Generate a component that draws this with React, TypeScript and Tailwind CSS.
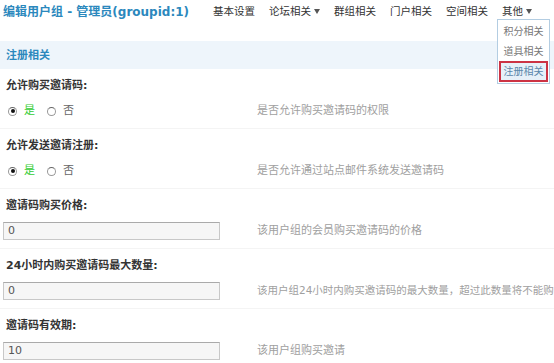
import React from "react"

const font = { fontFamily: '"DejaVu Sans", "Noto Sans CJK SC", sans-serif' }

function Caret() {
    return (
        <svg width="6" height="5" viewBox="0 0 6 5" className="ml-[3px] inline-block">
            <path d="M0 0 L6 0 L3 5 Z" fill="#555" />
        </svg>
    )
}

function Radio({ checked }: { checked?: boolean }) {
    return (
        <span className="w-[9px] h-[9px] rounded-full border border-[#9a9a9a] border-t-[#666] bg-white flex items-center justify-center">
            {checked && <span className="w-[4px] h-[4px] rounded-full bg-[#111]" />}
        </span>
    )
}

function Row({ label, desc, tight, children }: { label: string; desc: string; tight?: boolean; children: React.ReactNode }) {
    return (
        <div className="h-[60px] border-b border-[#f4f4f4]">
            <div className="h-[28px] flex items-center pt-[6px] pl-[6px] text-[11px] font-bold text-[#333]">{label}</div>
            <div className="h-[28px] flex items-center">
                <div className="w-[257px] shrink-0 flex items-center">{children}</div>
                <div className={`${tight ? "text-[10.5px]" : "text-[11px]"} text-[#a0a0a0] whitespace-nowrap`}>{desc}</div>
            </div>
        </div>
    )
}

function YesNo() {
    return (
        <div className="flex items-center pl-[8px] text-[11px]">
            <Radio checked />
            <span className="ml-[7px] text-[#33cc33]">是</span>
            <span className="ml-[12px]"><Radio /></span>
            <span className="ml-[7px] text-[#666]">否</span>
        </div>
    )
}

function Field({ value }: { value: string }) {
    return (
        <div className="ml-[3px] w-[217px] h-[18px] border border-[#c8c8c8] border-t-[#aaa] bg-[#f6f6f6] flex items-center pl-[4px] text-[11px] text-[#555]">
            {value}
        </div>
    )
}

export default function App() {
    const nav = ["基本设置", "论坛相关", "群组相关", "门户相关", "空间相关", "其他"]
    return (
        <div className="relative w-[554px] h-[363px] bg-white overflow-hidden" style={font}>
            {/* Header */}
            <div className="h-[23px] flex items-center">
                <div className="pl-[3px] text-[12px] font-bold text-[#2b88bd] whitespace-nowrap">编辑用户组 - 管理员(groupid:1)</div>
                <div className="ml-[24px] flex items-center gap-[14px] text-[10.5px] text-[#333]">
                    {nav.map((n, i) => (
                        <span key={n} className="flex items-center whitespace-nowrap">
                            {n}
                            {(i === 1 || i === 5) && <Caret />}
                        </span>
                    ))}
                </div>
            </div>

            {/* Section band */}
            <div className="mt-[18px] h-[28px] bg-[#eef5fb] flex items-center pt-[2px] pl-[6px] text-[11px] font-bold text-[#2b88bd]">
                注册相关
            </div>

            <Row label="允许购买邀请码:" desc="是否允许购买邀请码的权限"><YesNo /></Row>
            <Row label="允许发送邀请注册:" desc="是否允许通过站点邮件系统发送邀请码"><YesNo /></Row>
            <Row label="邀请码购买价格:" desc="该用户组的会员购买邀请码的价格"><Field value="0" /></Row>
            <Row label="24小时内购买邀请码最大数量:" desc="该用户组24小时内购买邀请码的最大数量，超过此数量将不能购" tight><Field value="0" /></Row>
            <Row label="邀请码有效期:" desc="该用户组购买邀请"><Field value="10" /></Row>

            {/* Dropdown menu */}
            <div className="absolute left-[497px] top-[19px] w-[53px] bg-white border border-[#b3cde2] py-[1px] text-[10px] text-[#777]">
                <div className="h-[20px] flex items-center justify-center">积分相关</div>
                <div className="h-[20px] flex items-center justify-center">道具相关</div>
                <div className="mx-[1px] h-[21px] flex items-center justify-center border-2 border-[#cc3344] bg-[#e6f0f8] text-[#5a86aa]">注册相关</div>
            </div>
        </div>
    )
}
